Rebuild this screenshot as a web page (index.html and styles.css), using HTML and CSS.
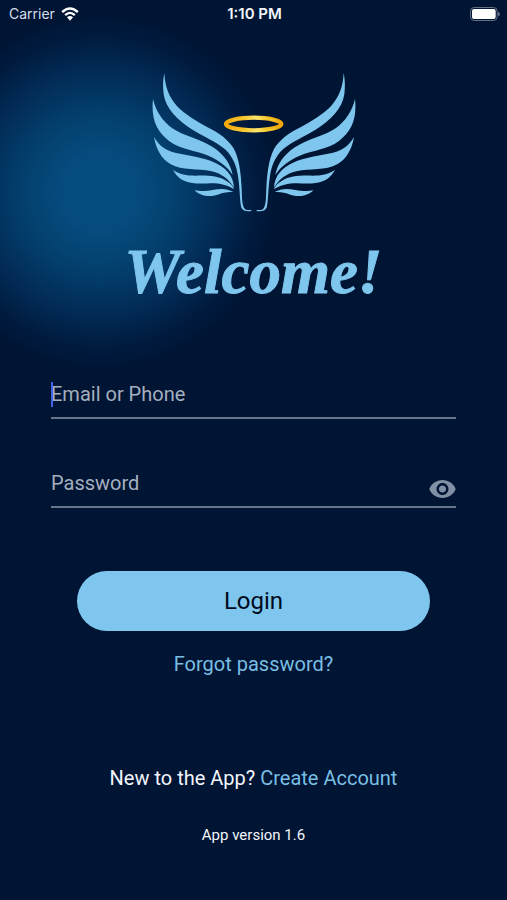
FILE: index.html
```html
<!DOCTYPE html>
<html lang="en">
<head>
<meta charset="utf-8">
<meta name="viewport" content="width=device-width, initial-scale=1">
<title>Login</title>
<link rel="stylesheet" href="styles.css">
</head>
<body>
<header class="status">
  <div class="status-left">
    <span>Carrier</span>
    <svg class="wifi" viewBox="0 0 54 42" aria-hidden="true">
      <path d="M1 13Q27-11 53 13L48 18Q27-2 6 18Z"/>
      <path d="M10 22Q27 6 44 22L39 27Q27 15 15 27Z"/>
      <path d="M18 31Q27 23 36 31L27 41Z"/>
    </svg>
  </div>
  <span class="time">1:10 PM</span>
  <svg class="battery" viewBox="0 0 90 42" aria-hidden="true">
    <rect class="battery-shell" x="1.5" y="1.5" width="80" height="39" rx="11"/>
    <rect class="battery-fill" x="6" y="6" width="71" height="30" rx="6"/>
    <path class="battery-cap" d="M84 14Q90 16 90 21T84 28Z"/>
  </svg>
</header>
<main class="screen">
  <svg class="logo" viewBox="21 18 612 426" role="img" aria-label="Wings and halo">
    <defs>
      <linearGradient id="gold" x1="0" x2="1" y1="0" y2="0">
        <stop offset="0" stop-color="#f5aa08"/>
        <stop offset=".3" stop-color="#f4bf20"/>
        <stop offset=".55" stop-color="#fbe36a"/>
        <stop offset=".75" stop-color="#f4c11d"/>
        <stop offset="1" stop-color="#eda50a"/>
      </linearGradient>
      <g id="wing">
        <path d="M58 24C60 66 72 96 95 122C120 149 155 168 186 186C222 203 250 224 267 252C284 285 288 330 290 370C291 400 291 422 299 431C304 436 312 435 319 435L319 438C303 440 294 437 289 428C284 410 285 370 279 333C275 305 264 275 240 253C212 229 173 214 140 193C98 166 62 131 56 88C53 66 54 43 58 24Z"/>
        <path d="M24 102C32 137 52 168 82 190C118 214 165 222 203 246C237 268 257 297 263 330C247 304 222 286 190 272C150 256 108 254 72 228C33 198 18 160 24 102Z"/>
        <path d="M27 216C42 242 62 256 90 263C130 272 175 276 210 293C242 308 265 330 267 368C249 340 231 327 200 319C157 309 114 318 76 297C48 281 33 251 27 216Z"/>
        <path d="M84 315C105 328 124 332 151 332C187 331 220 332 243 347C257 355 264 363 267 373C247 360 226 355 198 355C169 356 141 358 119 348C102 341 92 329 84 315Z"/>
        <path d="M149 376C168 380 184 378 203 375C227 370 247 371 265 381C246 380 233 383 218 389C195 397 165 394 149 376Z"/>
      </g>
    </defs>
    <g class="wings">
      <use href="#wing"/>
      <use href="#wing" transform="translate(654 0) scale(-1 1)"/>
    </g>
    <ellipse class="halo" cx="326" cy="177" rx="83" ry="19"/>
    <path class="halo-shine" d="M260 166Q325 150 391 166M260 192Q325 206 391 192"/>
  </svg>
  <h1 class="welcome">Welcome!</h1>
  <form class="form">
    <div class="field">
      <input id="user" type="text" placeholder=" ">
      <label for="user">Email or Phone</label>
      <span class="caret"></span>
    </div>
    <div class="field">
      <input id="pass" type="password" placeholder=" ">
      <label for="pass">Password</label>
      <button class="reveal" type="button" aria-label="Show password">
        <svg viewBox="1 4.5 22 15" aria-hidden="true"><path d="M12 4.5C7 4.5 2.73 7.61 1 12c1.73 4.39 6 7.5 11 7.5s9.27-3.11 11-7.5c-1.73-4.39-6-7.5-11-7.5zM12 17c-2.76 0-5-2.24-5-5s2.24-5 5-5 5 2.24 5 5-2.24 5-5 5zm0-8c-1.66 0-3 1.34-3 3s1.34 3 3 3 3-1.34 3-3-1.34-3-3-3z"/></svg>
      </button>
    </div>
    <button class="login" type="submit">Login</button>
  </form>
  <a class="forgot" href="#">Forgot password?</a>
  <p class="signup">New to the App? <a href="#">Create Account</a></p>
  <p class="version">App version 1.6</p>
</main>
</body>
</html>
```
FILE: styles.css
```css
* { box-sizing: border-box; }

body {
  margin: 0;
  min-height: 100vh;
  color: #f2f6fc;
  background: #001433 radial-gradient(circle at 100px 192px, #054d80 0, #054b7d 40px, #033f6d 80px, #022c57 120px, #001b3f 155px, #001433 180px) no-repeat;
  font-family: Roboto, "Liberation Sans", sans-serif;
}

a { color: #79bfe4; text-decoration: none; }

.status {
  display: grid;
  grid-template-columns: 1fr auto 1fr;
  align-items: center;
  height: 28px;
  padding: 0 7px 0 9px;
  font: 14px/20px Inter, sans-serif;
}
.status-left { display: flex; align-items: center; gap: 6px; color: #d5deeb; }
.wifi { width: 18px; height: 14px; fill: #fff; }
.time { font-size: 15px; font-weight: 600; }
.battery { justify-self: end; width: 30px; height: 14px; }
.battery-shell { fill: none; stroke: #667085; stroke-width: 3; }
.battery-fill { fill: #fff; }
.battery-cap { fill: #667085; }

.screen {
  display: flex;
  flex-direction: column;
  align-items: center;
  padding: 43px 51px 40px;
}
.logo { width: 204px; height: 142px; }
.wings { fill: #7ec6ed; }
.halo { fill: none; stroke: url(#gold); stroke-width: 13; }
.halo-shine { fill: none; stroke: #ffe680; stroke-width: 2; opacity: .6; }

.welcome {
  margin: 23px 0 0;
  color: #7ec6ed;
  font: italic 700 63px/72px "Liberation Serif", serif;
  -webkit-text-stroke: 1px #7ec6ed;
}

.form {
  display: flex;
  flex-direction: column;
  gap: 40px;
  width: 100%;
  margin-top: 62px;
}
.field {
  position: relative;
  display: grid;
  grid-template-columns: 1fr auto;
  height: 49px;
  border-bottom: 2px solid #687589;
}
.field input,
.field label {
  grid-area: 1 / 1;
  font: 20px/24px Roboto, sans-serif;
}
.field input {
  width: 100%;
  padding: 0;
  border: 0;
  outline: 0;
  background: none;
  color: #f2f6fc;
}
.field label {
  align-self: center;
  color: #a5afbf;
  pointer-events: none;
}
.field input:not(:placeholder-shown) + label { visibility: hidden; }
.caret {
  position: absolute;
  left: 0;
  top: 12px;
  width: 2px;
  height: 25px;
  background: #4263eb;
}
.reveal {
  grid-area: 1 / 2;
  align-self: end;
  width: 27px;
  height: 18px;
  margin-bottom: 8px;
  padding: 0;
  border: 0;
  background: none;
}
.reveal svg { display: block; width: 27px; height: 18px; fill: #8190a5; }
.login {
  height: 60px;
  margin: 23px 26px 0;
  border: 0;
  border-radius: 30px;
  background: #7ec6ed;
  color: #000a1c;
  font: 24px/28px Roboto, sans-serif;
}
.forgot { margin-top: 21px; font-size: 20px; line-height: 24px; }
.signup { margin: 90px 0 0; font-size: 20px; line-height: 24px; }
.version { margin: 35px 0 0; font-size: 15px; line-height: 20px; }
```
